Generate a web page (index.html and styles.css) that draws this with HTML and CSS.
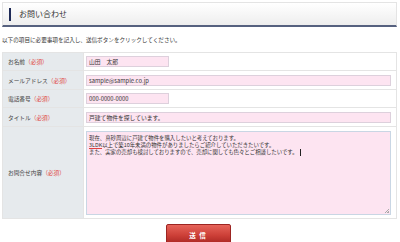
FILE: index.html
```html
<!DOCTYPE html>
<html lang="ja">
<head>
    <meta charset="UTF-8">
    <title>お問い合わせ</title>
    <link rel="stylesheet" href="styles.css">
</head>
<body>
    <div class="page">
        <h2 class="page-title">お問い合わせ</h2>
        <p class="lead">以下の項目に必要事項を記入し、送信ボタンをクリックしてください。</p>

        <table class="form-table">
            <tr class="row-short">
                <th>お名前<span class="req">（必須）</span></th>
                <td><input class="input short" type="text" value="山田　太郎"></td>
            </tr>
            <tr class="row-tall">
                <th>メールアドレス<span class="req">（必須）</span></th>
                <td><input class="input wide" type="text" value="sample@sample.co.jp"></td>
            </tr>
            <tr class="row-short">
                <th>電話番号<span class="req">（必須）</span></th>
                <td><input class="input short" type="text" value="000-0000-0000"></td>
            </tr>
            <tr class="row-tall">
                <th>タイトル<span class="req">（必須）</span></th>
                <td><input class="input wide" type="text" value="戸建て物件を探しています。"></td>
            </tr>
            <tr>
                <th>お問合せ内容<span class="req">（必須）</span></th>
                <td>
                    <div class="textarea">現在、真砂周辺に戸建て物件を購入したいと考えております。<br><span class="typo">3LDK</span>以上で築10年未満の物件がありましたらご紹介していただきたいです。<br>また、実家の売却も検討しておりますので、売却に関しても色々とご相談したいです。<span class="caret"></span></div>
                </td>
            </tr>
        </table>

        <div class="actions">
            <button class="submit-btn">送 信</button>
        </div>
    </div>
</body>
</html>
```

FILE: styles.css
```css
* {
    margin: 0;
    padding: 0;
    box-sizing: border-box;
}

body {
    background: #fff;
    color: #333;
    font-family: "Noto Sans CJK JP", "Liberation Sans", sans-serif;
    padding: 2px 3px 0 2px;
}

.page-title {
    position: relative;
    height: 25px;
    padding-left: 16px;
    background: linear-gradient(#ffffff, #eeeeee);
    border: 1px solid #e4e4e4;
    border-bottom: 2px solid #56617f;
    font-size: 8px;
    font-weight: normal;
    line-height: 21px;
    color: #333;
}

.page-title::before {
    content: "";
    position: absolute;
    left: 6px;
    top: 5px;
    width: 2px;
    height: 13px;
    background: #1f2b57;
}

.lead {
    font-size: 5.6px;
    line-height: 8px;
    margin: 9px 0 8px;
    color: #333;
}

.form-table {
    width: 100%;
    border-collapse: collapse;
    border: 1px solid #e2e2e2;
}

.form-table th,
.form-table td {
    border: 1px solid #e4e4e4;
    vertical-align: middle;
}

.form-table th {
    width: 81px;
    background: #e6eaed;
    text-align: left;
    font-weight: normal;
    font-size: 5.7px;
    padding-left: 5px;
    color: #444;
}

.form-table td {
    padding: 0 5px 0 2px;
}

.row-short {
    height: 18px;
}

.row-tall {
    height: 19px;
}

.req {
    color: #e0453f;
}

.input {
    display: block;
    height: 11px;
    background: #fde4f1;
    border: 1px solid #ddd0dc;
    font-family: "Noto Sans CJK JP", "Liberation Sans", sans-serif;
    font-size: 5.8px;
    color: #333;
    padding: 0 2px;
    outline: none;
}

.input.short {
    width: 83px;
}

.input.wide {
    width: 100%;
}

.textarea {
    position: relative;
    margin: 4px 0 3px;
    height: 84px;
    background: #fde4f1;
    border: 1px solid #c9d6e4;
    font-size: 5.4px;
    line-height: 7px;
    padding: 3px 2px;
    color: #333;
}

.textarea::after {
    content: "";
    position: absolute;
    right: 1px;
    bottom: 1px;
    width: 4px;
    height: 4px;
    background: linear-gradient(135deg, transparent 50%, #aaa 50%, #aaa 60%, transparent 60%, transparent 75%, #aaa 75%);
}

.typo {
    display: inline-block;
    line-height: 6px;
    border-bottom: 1px solid #e04040;
}

.caret {
    display: inline-block;
    width: 1px;
    height: 7px;
    background: #222;
    vertical-align: middle;
    margin-left: 2px;
}

.actions {
    display: flex;
    justify-content: center;
    padding-top: 5px;
    padding-right: 3px;
}

.submit-btn {
    width: 65px;
    height: 21px;
    background: linear-gradient(#e6645a, #cc3f37 55%, #a82622);
    border: 1px solid #9c2522;
    border-radius: 2px;
    color: #fff;
    font-family: "Noto Sans CJK JP", sans-serif;
    font-size: 6.5px;
    font-weight: bold;
    letter-spacing: 1px;
}
```
